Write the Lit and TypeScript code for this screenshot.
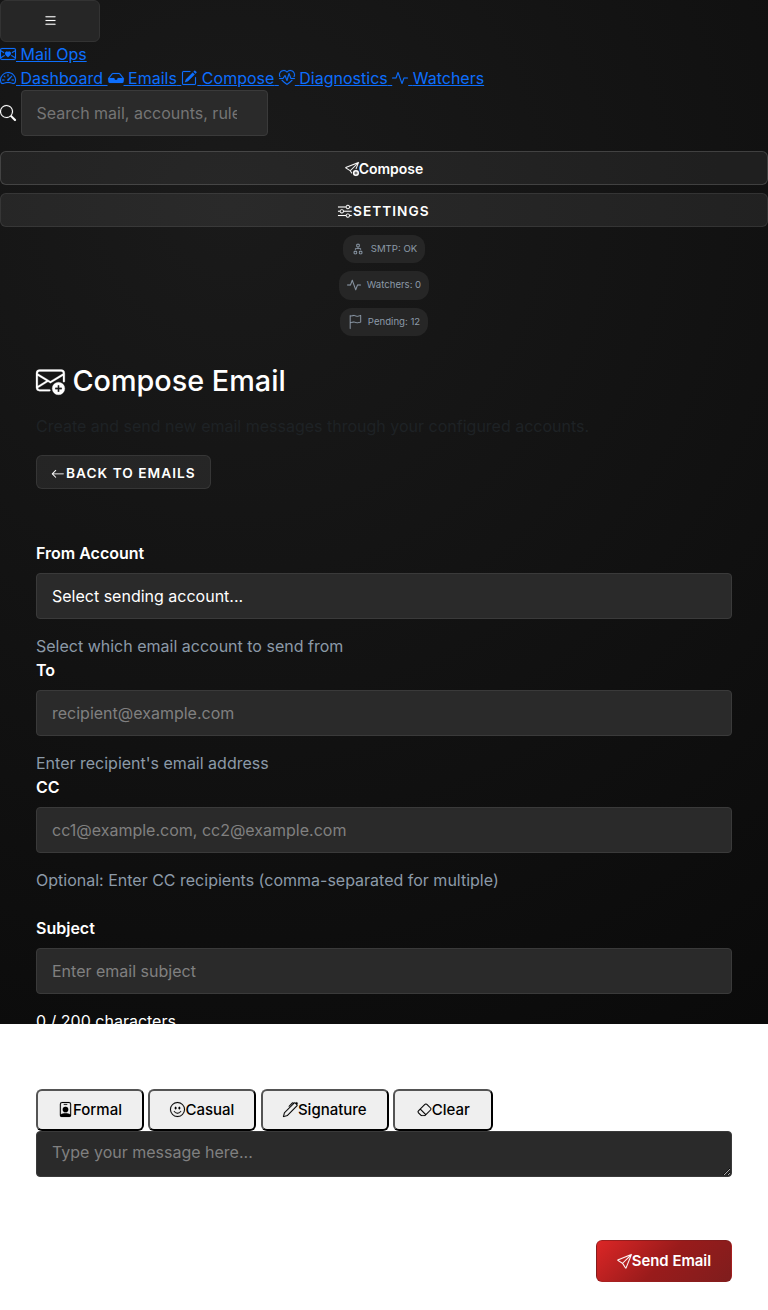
import { LitElement, html, css, svg } from "lit";
import { customElement, property } from "lit/decorators.js";

const PLUS_BADGE =
  "M16 12.5a3.5 3.5 0 1 1-7 0 3.5 3.5 0 0 1 7 0m-3.5-2a.5.5 0 0 0-.5.5v1h-1a.5.5 0 0 0 0 1h1v1a.5.5 0 0 0 1 0v-1h1a.5.5 0 0 0 0-1h-1v-1a.5.5 0 0 0-.5-.5";

const ICONS: Record<string, string[]> = {
  list: [
    "M2.5 12a.5.5 0 0 1 .5-.5h10a.5.5 0 0 1 0 1H3a.5.5 0 0 1-.5-.5m0-4a.5.5 0 0 1 .5-.5h10a.5.5 0 0 1 0 1H3a.5.5 0 0 1-.5-.5m0-4a.5.5 0 0 1 .5-.5h10a.5.5 0 0 1 0 1H3a.5.5 0 0 1-.5-.5",
  ],
  envelopeHeart: [
    "M0 4a2 2 0 0 1 2-2h12a2 2 0 0 1 2 2v8a2 2 0 0 1-2 2H2a2 2 0 0 1-2-2zm2-1a1 1 0 0 0-1 1v.217l3.235 1.94a2.76 2.76 0 0 0-.233 1.027L1 5.384v5.721l3.453-2.124q.219.416.55.835l-3.97 2.443A1 1 0 0 0 2 13h12a1 1 0 0 0 .966-.741l-3.968-2.442q.33-.421.55-.836L15 11.105V5.383l-3.002 1.801a2.8 2.8 0 0 0-.233-1.026L15 4.217V4a1 1 0 0 0-1-1zm6 2.993c1.664-1.711 5.825 1.283 0 5.132-5.825-3.85-1.664-6.843 0-5.132",
  ],
  speedometer: [
    "M8 4a.5.5 0 0 1 .5.5V6a.5.5 0 0 1-1 0V4.5A.5.5 0 0 1 8 4M3.732 5.732a.5.5 0 0 1 .707 0l.915.914a.5.5 0 1 1-.708.708l-.914-.915a.5.5 0 0 1 0-.707M2 10a.5.5 0 0 1 .5-.5h1.586a.5.5 0 0 1 0 1H2.5A.5.5 0 0 1 2 10m9.5 0a.5.5 0 0 1 .5-.5h1.5a.5.5 0 0 1 0 1H12a.5.5 0 0 1-.5-.5m.754-4.246a.39.39 0 0 0-.527-.02L7.547 9.31a.91.91 0 1 0 1.302 1.258l3.434-4.297a.39.39 0 0 0-.029-.518z",
    "M0 10a8 8 0 1 1 15.547 2.661c-.442 1.253-1.845 1.602-2.932 1.25C11.309 13.488 9.475 13 8 13c-1.474 0-3.31.488-4.615.911-1.087.352-2.49.003-2.932-1.25A8 8 0 0 1 0 10m8-7a7 7 0 0 0-6.603 9.329c.203.575.923.876 1.68.63C4.397 12.533 6.358 12 8 12s3.604.532 4.923.96c.757.245 1.477-.056 1.68-.631A7 7 0 0 0 8 3",
  ],
  inbox: [
    "M4.98 4a.5.5 0 0 0-.39.188L1.54 8H6a.5.5 0 0 1 .5.5 1.5 1.5 0 1 0 3 0A.5.5 0 0 1 10 8h4.46l-3.05-3.812A.5.5 0 0 0 11.02 4zm-1.17-.437A1.5 1.5 0 0 1 4.98 3h6.04a1.5 1.5 0 0 1 1.17.563l3.7 4.625a.5.5 0 0 1 .106.374l-.39 3.124A1.5 1.5 0 0 1 14.117 13H1.883a1.5 1.5 0 0 1-1.489-1.314l-.39-3.124a.5.5 0 0 1 .106-.374z",
  ],
  pencilSquare: [
    "M15.502 1.94a.5.5 0 0 1 0 .706L14.459 3.69l-2-2L13.502.646a.5.5 0 0 1 .707 0l1.293 1.293zm-1.75 2.456-2-2L4.939 9.21a.5.5 0 0 0-.121.196l-.805 2.414a.25.25 0 0 0 .316.316l2.414-.805a.5.5 0 0 0 .196-.12l6.813-6.814z",
    "M1 13.5A1.5 1.5 0 0 0 2.5 15h11a1.5 1.5 0 0 0 1.5-1.5v-6a.5.5 0 0 0-1 0v6a.5.5 0 0 1-.5.5h-11a.5.5 0 0 1-.5-.5v-11a.5.5 0 0 1 .5-.5H9a.5.5 0 0 0 0-1H2.5A1.5 1.5 0 0 0 1 2.5z",
  ],
  heartPulse: [
    "m8 2.748-.717-.737C5.6.281 2.514.878 1.4 3.053.918 3.995.78 5.323 1.508 7H.43c-2.128-5.697 4.165-8.83 7.394-5.857q.09.083.176.171a3 3 0 0 1 .176-.17c3.23-2.974 9.522.159 7.394 5.856h-1.078c.728-1.677.59-3.005.108-3.947C13.486.878 10.4.28 8.717 2.01zM2.212 10h1.315C4.593 11.183 6.05 12.458 8 13.795c1.949-1.337 3.407-2.612 4.473-3.795h1.315c-1.265 1.566-3.14 3.25-5.788 5-2.648-1.75-4.523-3.434-5.788-5",
    "M10.464 3.314a.5.5 0 0 0-.945.049L7.921 8.956 6.464 5.314a.5.5 0 0 0-.88-.091L3.732 8H.5a.5.5 0 0 0 0 1H4a.5.5 0 0 0 .416-.223l1.473-2.209 1.647 4.118a.5.5 0 0 0 .945-.049l1.598-5.593 1.457 3.642A.5.5 0 0 0 12 9h3.5a.5.5 0 0 0 0-1h-3.162z",
  ],
  activity: [
    "M6 2a.5.5 0 0 1 .47.33L10 12.036l1.53-4.208A.5.5 0 0 1 12 7.5h3.5a.5.5 0 0 1 0 1h-3.15l-1.88 5.17a.5.5 0 0 1-.94 0L6 3.964 4.47 8.171A.5.5 0 0 1 4 8.5H.5a.5.5 0 0 1 0-1h3.15l1.88-5.17A.5.5 0 0 1 6 2",
  ],
  search: [
    "M11.742 10.344a6.5 6.5 0 1 0-1.397 1.398h-.001q.044.06.098.115l3.85 3.85a1 1 0 0 0 1.415-1.414l-3.85-3.85a1 1 0 0 0-.115-.1zM12 6.5a5.5 5.5 0 1 1-11 0 5.5 5.5 0 0 1 11 0",
  ],
  sendPlus: [
    "M15.964.686a.5.5 0 0 0-.65-.65L.767 5.855a.75.75 0 0 0-.124 1.329l4.995 3.178 1.531 2.406a.5.5 0 0 0 .844-.536L6.637 10.07l7.494-7.494-1.895 4.738a.5.5 0 1 0 .928.372zm-2.54 1.183L5.93 9.363 1.591 6.602z",
    PLUS_BADGE,
  ],
  send: [
    "M15.854.146a.5.5 0 0 1 .11.54l-5.819 14.547a.75.75 0 0 1-1.329.124l-3.178-4.995L.643 7.184a.75.75 0 0 1 .124-1.33L15.314.037a.5.5 0 0 1 .54.11ZM6.636 10.07l2.761 4.338L14.13 2.576zm6.787-8.201L1.591 6.602l4.339 2.76z",
  ],
  sliders: [
    "M11.5 2a1.5 1.5 0 1 0 0 3 1.5 1.5 0 0 0 0-3M9.05 3a2.5 2.5 0 0 1 4.9 0H16v1h-2.05a2.5 2.5 0 0 1-4.9 0H0V3zM4.5 7a1.5 1.5 0 1 0 0 3 1.5 1.5 0 0 0 0-3M2.05 8a2.5 2.5 0 0 1 4.9 0H16v1H6.95a2.5 2.5 0 0 1-4.9 0H0V8zm9.45 4a1.5 1.5 0 1 0 0 3 1.5 1.5 0 0 0 0-3m-2.45 1a2.5 2.5 0 0 1 4.9 0H16v1h-2.05a2.5 2.5 0 0 1-4.9 0H0v-1z",
  ],
  diagram: [
    "M6 3.5A1.5 1.5 0 0 1 7.5 2h1A1.5 1.5 0 0 1 10 3.5v1A1.5 1.5 0 0 1 8.5 6v1H11a.5.5 0 0 1 .5.5v1a.5.5 0 0 1-1 0V8h-5v.5a.5.5 0 0 1-1 0v-1A.5.5 0 0 1 5 7h2.5V6A1.5 1.5 0 0 1 6 4.5zM8.5 5a.5.5 0 0 0 .5-.5v-1a.5.5 0 0 0-.5-.5h-1a.5.5 0 0 0-.5.5v1a.5.5 0 0 0 .5.5zM3 11.5A1.5 1.5 0 0 1 4.5 10h1A1.5 1.5 0 0 1 7 11.5v1A1.5 1.5 0 0 1 5.5 14h-1A1.5 1.5 0 0 1 3 12.5zm1.5-.5a.5.5 0 0 0-.5.5v1a.5.5 0 0 0 .5.5h1a.5.5 0 0 0 .5-.5v-1a.5.5 0 0 0-.5-.5zm4.5.5a1.5 1.5 0 0 1 1.5-1.5h1a1.5 1.5 0 0 1 1.5 1.5v1a1.5 1.5 0 0 1-1.5 1.5h-1A1.5 1.5 0 0 1 9 12.5zm1.5-.5a.5.5 0 0 0-.5.5v1a.5.5 0 0 0 .5.5h1a.5.5 0 0 0 .5-.5v-1a.5.5 0 0 0-.5-.5z",
  ],
  flag: [
    "M14.778.085A.5.5 0 0 1 15 .5V8a.5.5 0 0 1-.314.464L14.5 8l.186.464-.003.001-.006.003-.023.009a12 12 0 0 1-.397.15c-.264.095-.631.223-1.047.35-.816.252-1.879.523-2.71.523-.847 0-1.548-.28-2.158-.525l-.028-.01C7.68 8.71 7.14 8.5 6.5 8.5c-.7 0-1.638.23-2.437.477A20 20 0 0 0 3 9.342V15.5a.5.5 0 0 1-1 0V.5a.5.5 0 0 1 1 0v.282c.226-.079.496-.17.79-.26C4.606.272 5.67 0 6.5 0c.84 0 1.524.277 2.121.519l.043.018C9.286.788 9.828 1 10.5 1c.7 0 1.638-.23 2.437-.477a20 20 0 0 0 1.349-.476l.019-.007.004-.002h.001M14 1.221c-.22.078-.48.167-.766.255-.81.252-1.872.523-2.734.523-.886 0-1.592-.286-2.203-.534l-.008-.003C7.662 1.21 7.139 1 6.5 1c-.669 0-1.606.229-2.415.478A21 21 0 0 0 3 1.845v6.433c.22-.078.48-.167.766-.255C4.576 7.77 5.638 7.5 6.5 7.5c.847 0 1.548.28 2.158.525l.028.01C9.32 8.29 9.86 8.5 10.5 8.5c.668 0 1.606-.229 2.415-.478A21 21 0 0 0 14 7.655V1.222z",
  ],
  envelopePlus: [
    "M2 2a2 2 0 0 0-2 2v8.01A2 2 0 0 0 2 14h5.5a.5.5 0 0 0 0-1H2a1 1 0 0 1-.966-.741l5.64-3.471L8 9.583l7-4.2V8.5a.5.5 0 0 0 1 0V4a2 2 0 0 0-2-2zm3.708 6.208L1 11.105V5.383zM1 4.217V4a1 1 0 0 1 1-1h12a1 1 0 0 1 1 1v.217l-7 4.2z",
    PLUS_BADGE,
  ],
  arrowLeft: [
    "M15 8a.5.5 0 0 0-.5-.5H2.707l3.147-3.146a.5.5 0 1 0-.708-.708l-4 4a.5.5 0 0 0 0 .708l4 4a.5.5 0 0 0 .708-.708L2.707 8.5H14.5A.5.5 0 0 0 15 8",
  ],
  personBadge: [
    "M6.5 2a.5.5 0 0 0 0 1h3a.5.5 0 0 0 0-1zM11 8a3 3 0 1 1-6 0 3 3 0 0 1 6 0",
    "M4.5 0A2.5 2.5 0 0 0 2 2.5V14a2 2 0 0 0 2 2h8a2 2 0 0 0 2-2V2.5A2.5 2.5 0 0 0 11.5 0zM3 2.5A1.5 1.5 0 0 1 4.5 1h7A1.5 1.5 0 0 1 13 2.5v10.795a4.2 4.2 0 0 0-.776-.492C11.392 12.387 10.063 12 8 12s-3.392.387-4.224.803a4.2 4.2 0 0 0-.776.492z",
  ],
  smile: [
    "M8 15A7 7 0 1 1 8 1a7 7 0 0 1 0 14m0 1A8 8 0 1 0 8 0a8 8 0 0 0 0 16",
    "M4.285 9.567a.5.5 0 0 1 .683.183A3.5 3.5 0 0 0 8 11.5a3.5 3.5 0 0 0 3.032-1.75.5.5 0 1 1 .866.5A4.5 4.5 0 0 1 8 12.5a4.5 4.5 0 0 1-3.898-2.25.5.5 0 0 1 .183-.683M7 6.5C7 7.328 6.552 8 6 8s-1-.672-1-1.5S5.448 5 6 5s1 .672 1 1.5m4 0c0 .828-.448 1.5-1 1.5s-1-.672-1-1.5S9.448 5 10 5s1 .672 1 1.5",
  ],
  pen: [
    "m13.498.795.149-.149a1.207 1.207 0 1 1 1.707 1.708l-.149.148a1.5 1.5 0 0 1-.059 2.059L4.854 14.854a.5.5 0 0 1-.233.131l-4 1a.5.5 0 0 1-.606-.606l1-4a.5.5 0 0 1 .131-.232l9.642-9.642a.5.5 0 0 0-.642.056L6.854 4.854a.5.5 0 1 1-.708-.708L9.44.854A1.5 1.5 0 0 1 11.5.796a1.5 1.5 0 0 1 1.998-.001m-.644.766a.5.5 0 0 0-.707 0L1.95 11.756l-.764 3.057 3.057-.764L14.44 3.854a.5.5 0 0 0 0-.708z",
  ],
  eraser: [
    "M8.086 2.207a2 2 0 0 1 2.828 0l3.879 3.879a2 2 0 0 1 0 2.828l-5.5 5.5A2 2 0 0 1 7.879 15H5.12a2 2 0 0 1-1.414-.586l-2.5-2.5a2 2 0 0 1 0-2.828zm2.121.707a1 1 0 0 0-1.414 0L4.16 7.547l5.293 5.293 4.633-4.633a1 1 0 0 0 0-1.414zM8.746 13.547 3.453 8.254 1.914 9.793a1 1 0 0 0 0 1.414l2.5 2.5a1 1 0 0 0 .707.293H7.88a1 1 0 0 0 .707-.293z",
  ],
};

@customElement("ui-icon")
export class UiIcon extends LitElement {
  static styles = css`
    :host {
      display: inline-block;
      width: 1em;
      height: 1em;
      line-height: 1;
      vertical-align: -0.125em;
    }
    .glyph {
      display: block;
      width: 100%;
      height: 100%;
      overflow: visible;
      fill: currentColor;
      stroke: currentColor;
      stroke-width: 0.15;
    }
  `;

  @property() name = "";

  render() {
    return html`<svg class="glyph" viewBox="0 0 16 16" aria-hidden="true">
      ${(ICONS[this.name] ?? []).map((d) => svg`<path fill-rule="evenodd" d=${d}></path>`)}
    </svg>`;
  }
}

const NAV = [
  { icon: "speedometer", label: "Dashboard" },
  { icon: "inbox", label: "Emails" },
  { icon: "pencilSquare", label: "Compose" },
  { icon: "heartPulse", label: "Diagnostics" },
  { icon: "activity", label: "Watchers" },
];

const STATUS = [
  { icon: "diagram", label: "SMTP: OK" },
  { icon: "activity", label: "Watchers: 0" },
  { icon: "flag", label: "Pending: 12" },
];

const TEMPLATES = [
  { icon: "personBadge", label: "Formal" },
  { icon: "smile", label: "Casual" },
  { icon: "pen", label: "Signature" },
  { icon: "eraser", label: "Clear" },
];

@customElement("app-root")
export class AppRoot extends LitElement {
  static styles = css`
    :host {
      display: block;
      min-height: 1310px;
      color: #fff;
      font: 400 16px/24px Inter, "Liberation Sans", sans-serif;
      background: #fff
        radial-gradient(circle at 30% 20%, #1a1a1a 0%, #0a0a0a 100%) 0 0 / 100% 1024px no-repeat;
    }
    *,
    *::before,
    *::after {
      box-sizing: border-box;
    }
    button,
    input,
    select,
    textarea {
      font-family: inherit;
      margin: 0;
    }
    .menu {
      display: flex;
      align-items: center;
      justify-content: center;
      width: 100px;
      height: 42px;
      padding: 0 0 1px;
      color: #fff;
      font-size: 15px;
      background: #262626;
      border: 1px solid #333;
      border-radius: 6px;
    }
    .link {
      color: #0d6efd;
      text-decoration: underline;
    }
    .search {
      display: flex;
      align-items: center;
      gap: 4.5px;
      height: 46px;
    }
    .field {
      display: block;
      width: 100%;
      height: 46px;
      padding: 10px 15px;
      color: #fff;
      font-size: 16px;
      line-height: 24px;
      background: #2a2a2a;
      border: 1px solid #3a3a3a;
      border-radius: 4px;
      appearance: none;
      outline: none;
    }
    .field::placeholder {
      color: #808080;
      opacity: 1;
    }
    .search .field {
      width: 247px;
      padding-right: 30px;
    }
    .search .field::placeholder {
      color: #757575;
    }
    .actions {
      display: flex;
      flex-direction: column;
      align-items: center;
      gap: 8px;
      margin-top: 15px;
    }
    .bar {
      display: flex;
      align-items: center;
      justify-content: center;
      width: 100%;
      height: 34px;
      padding: 1px 15px 0;
      color: #fff;
      font-size: 14px;
      font-weight: 600;
      line-height: 21px;
      background: rgba(255, 255, 255, 0.06);
      border: 1px solid rgba(255, 255, 255, 0.15);
      border-radius: 6px;
    }
    .caps {
      padding-top: 2px;
      font-size: 13.7px;
      letter-spacing: 1px;
      text-transform: uppercase;
      background: rgba(255, 255, 255, 0.07);
      border-color: rgba(255, 255, 255, 0.08);
    }
    .caps ui-icon {
      margin-right: 1px;
    }
    .pill {
      display: flex;
      align-items: center;
      gap: 6px;
      height: 28.3px;
      padding: 0 8px;
      color: #8c9aa8;
      font-size: 9.6px;
      line-height: 16px;
      background: #262626;
      border-radius: 12px;
    }
    .pill .sign {
      font-size: 14px;
    }
    .main {
      padding: 27.1px 36px 0;
    }
    .title {
      margin: 0;
      font-size: 28.8px;
      font-weight: 500;
      line-height: 35px;
    }
    .lead {
      margin: 16px 0 17px;
      color: #1e2225;
    }
    .back {
      width: 175px;
      padding: 3px 0 0;
    }
    .form {
      margin-top: 52px;
    }
    .label {
      display: block;
      margin-bottom: 8px;
      font-weight: 600;
    }
    .help {
      margin-top: 15px;
      color: #8c9aa8;
    }
    .subject {
      margin-top: 24px;
    }
    .count {
      margin-top: 15px;
    }
    .templates {
      display: flex;
      gap: 4.5px;
      margin-top: 56px;
    }
    .template {
      display: flex;
      align-items: center;
      justify-content: center;
      min-width: 100px;
      height: 42px;
      padding: 0 20px 1px;
      color: #000;
      font-size: 15px;
      font-weight: 500;
      background: #efefef;
      border: 2px outset #000;
      border-radius: 6px;
    }
    .message {
      padding-top: 8px;
      resize: vertical;
    }
    .footer {
      display: flex;
      justify-content: flex-end;
      margin-top: 63px;
    }
    .send {
      display: flex;
      align-items: center;
      justify-content: center;
      width: 136px;
      height: 42px;
      padding: 0;
      color: #fff;
      font-size: 14.9px;
      font-weight: 600;
      background: linear-gradient(135deg, #dc2626 0%, #991b1b 50%, #7f1d1d 100%);
      border: 1px solid rgba(127, 29, 29, 0.5);
      border-radius: 6px;
    }
  `;

  render() {
    return html`
      <button class="menu" aria-label="Menu"><ui-icon name="list"></ui-icon></button>
      <div><a class="link" href="#"><ui-icon name="envelopeHeart"></ui-icon> Mail Ops</a></div>
      <nav>
        ${NAV.map(
          (n) => html`<a class="link" href="#"><ui-icon name=${n.icon}></ui-icon> ${n.label} </a>`
        )}
      </nav>
      <div class="search">
        <ui-icon name="search"></ui-icon>
        <input class="field" type="text" placeholder="Search mail, accounts, rules" />
      </div>
      <div class="actions">
        <button class="bar"><ui-icon name="sendPlus"></ui-icon>Compose</button>
        <button class="bar caps"><ui-icon name="sliders"></ui-icon>Settings</button>
        ${STATUS.map(
          (s) => html`<div class="pill"><ui-icon class="sign" name=${s.icon}></ui-icon>${s.label}</div>`
        )}
      </div>
      <main class="main">
        <h1 class="title"><ui-icon name="envelopePlus"></ui-icon> Compose Email</h1>
        <p class="lead">Create and send new email messages through your configured accounts.</p>
        <button class="bar caps back"><ui-icon name="arrowLeft"></ui-icon>Back to Emails</button>
        <div class="form">
          <label class="label" for="from">From Account</label>
          <select class="field" id="from">
            <option>Select sending account...</option>
          </select>
          <div class="help">Select which email account to send from</div>
          <label class="label" for="to">To</label>
          <input class="field" id="to" placeholder="recipient@example.com" />
          <div class="help">Enter recipient's email address</div>
          <label class="label" for="cc">CC</label>
          <input class="field" id="cc" placeholder="cc1@example.com, cc2@example.com" />
          <div class="help">Optional: Enter CC recipients (comma-separated for multiple)</div>
          <div class="subject">
            <label class="label" for="subject">Subject</label>
            <input class="field" id="subject" placeholder="Enter email subject" />
            <div class="count">0 / 200 characters</div>
          </div>
          <div class="templates">
            ${TEMPLATES.map(
              (t) => html`<button class="template"><ui-icon name=${t.icon}></ui-icon>${t.label}</button>`
            )}
          </div>
          <textarea class="field message" placeholder="Type your message here..."></textarea>
          <div class="footer">
            <button class="send"><ui-icon name="send"></ui-icon>Send Email</button>
          </div>
        </div>
      </main>
    `;
  }
}
